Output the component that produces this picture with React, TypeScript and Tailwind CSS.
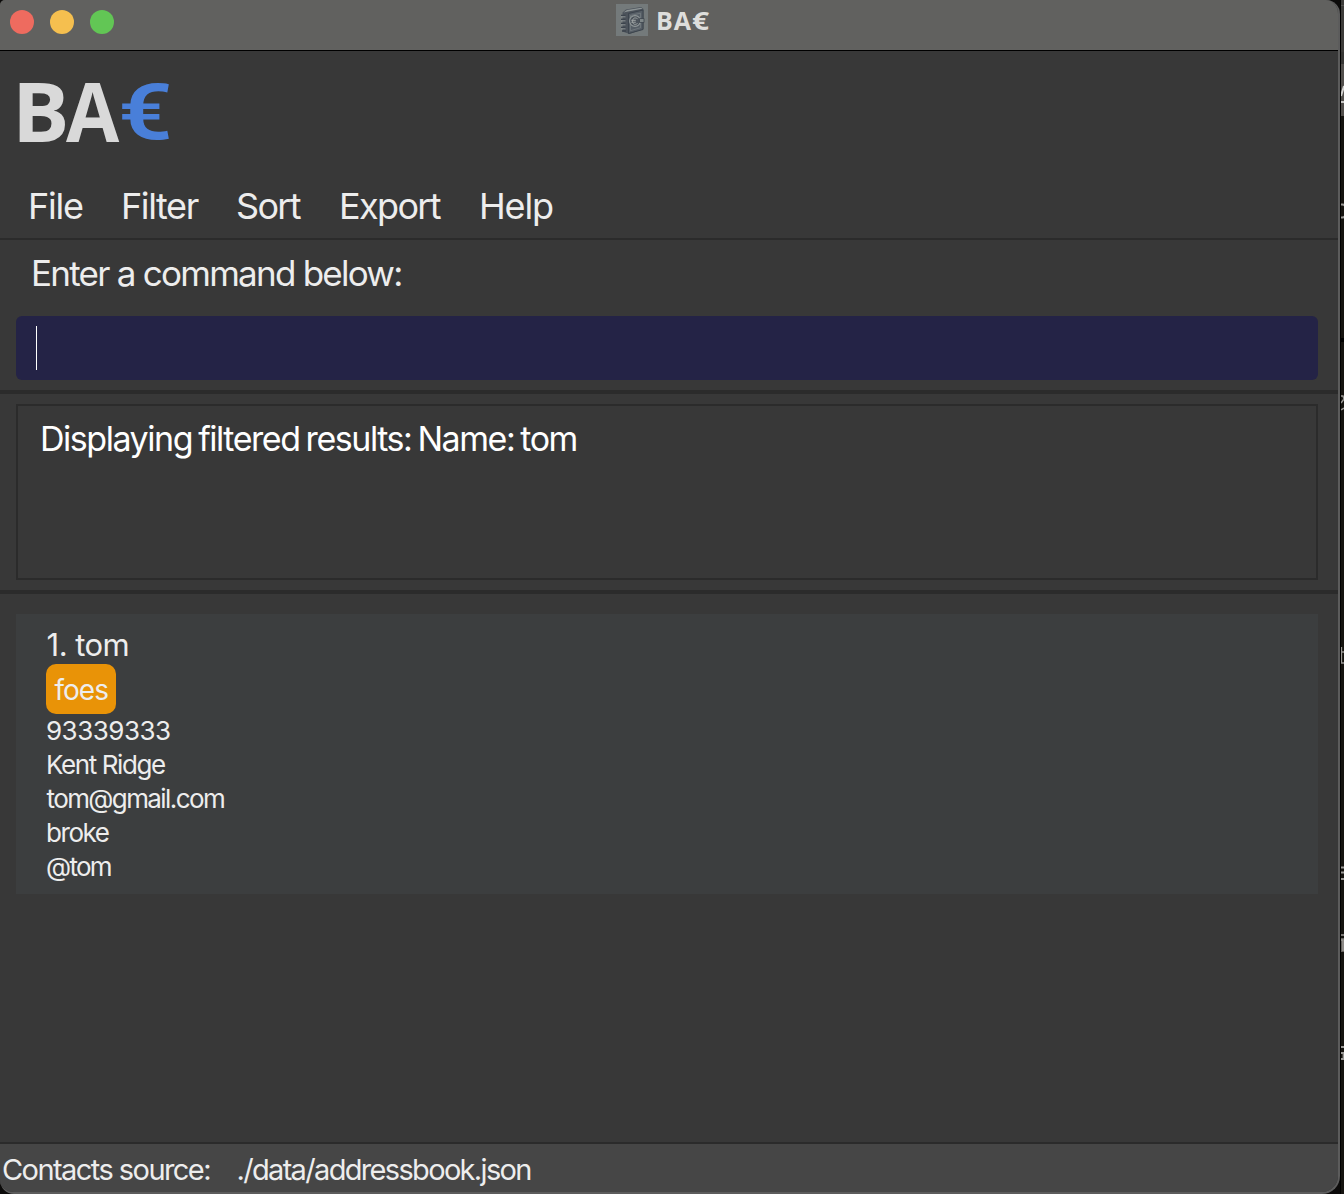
import type { ReactNode } from 'react';

function TrafficLights() {
  return (
    <div className="flex gap-4 pl-2.5">
      <span className="size-6 rounded-full bg-[#ee6b5f]" />
      <span className="size-6 rounded-full bg-[#f5bf4f]" />
      <span className="size-6 rounded-full bg-[#62c655]" />
    </div>
  );
}

function BookIcon() {
  return (
    <svg viewBox="0 0 32 32" className="size-8" fill="none">
      <rect width="32" height="32" fill="#747a7b" />
      <path d="M6.5 8.5 10 5.5 25 3l2.5 2v20L13.5 30l-7-2.5z" fill="#4c535b" />
      <path d="M7.5 8.5 11 6l14-2.2 1.5 1L12 7.6z" fill="#8d9495" />
      <path d="M12.5 9.5 27 6v19.5l-14.5 4z" fill="#565e66" stroke="#3c444d" />
      <path d="m14.5 11.5 10-2.3v14.5l-10 3z" stroke="#7f8789" strokeWidth=".6" />
      <circle cx="19" cy="17" r="5.4" fill="#4c535b" stroke="#92999a" strokeWidth="1.1" />
      <path d="M21.5 14.7c-3-1.8-5 0-5 2.5s2 4.3 5 2.3M15.3 16.3h4.5M15.3 18.2h4.5" stroke="#a0a6a6" strokeWidth="1" />
      <path d="M23.5 14.5h4.5v4h-4.5z" fill="#7e8688" stroke="#3c444d" strokeWidth=".8" />
      <path d="M5 11.5h4.5M5 15.5h4.5M5 19.5h4.5M5 23.5h4.5M6 27h4" stroke="#3c444d" strokeWidth="1.6" />
      <path d="M5 12.8h4.5M5 16.8h4.5M5 20.8h4.5M5 24.8h4.5" stroke="#9aa0a0" strokeWidth=".8" />
    </svg>
  );
}

function TitleBar() {
  return (
    <div className="grid h-[51px] shrink-0 grid-cols-[616px_1fr] border-b border-black bg-[#61615f]">
      <div className="pt-2.5">
        <TrafficLights />
      </div>
      <div className="flex items-start pt-1 text-[#dededc]">
        <BookIcon />
        <span className="ml-2 text-[25px] leading-8 font-bold tracking-[0.9px] font-['Open_Sans',sans-serif]">BA</span>
        <span className="text-[25px] leading-8 font-bold font-['Open_Sans',sans-serif]">
          <span className="inline-block origin-left scale-x-[1.2]">€</span>
        </span>
      </div>
    </div>
  );
}

function Logo() {
  return (
    <div className="flex h-[90px] pt-3.5 pl-3 text-[83px] leading-[90px] font-bold text-[#d9d9d9] font-['Open_Sans',sans-serif]">
      <span className="w-[54px]">
        <span className="inline-block origin-left scale-x-[1.03]">B</span>
      </span>
      <span className="w-[52px]">
        <span className="inline-block origin-left scale-x-[0.93]">A</span>
      </span>
      <span className="text-[78px] leading-[96px] font-semibold text-[#497fd9] font-['Roboto',sans-serif]">
        <span className="inline-block origin-left scale-x-[1.23]">€</span>
      </span>
    </div>
  );
}

function MenuBar() {
  return (
    <nav className="flex h-10 pl-7 text-[36px] leading-10">
      <span className="w-[93px] tracking-[-1.2px]">File</span>
      <span className="w-[115px] tracking-[-1.4px]">Filter</span>
      <span className="w-[103px] tracking-[-1.7px]">Sort</span>
      <span className="w-[140px] tracking-[-1.65px]">Export</span>
      <span className="tracking-[-1.15px]">Help</span>
    </nav>
  );
}

function Divider() {
  return <div className="h-1 shrink-0 bg-[#2b2b2b]" />;
}

function CardLine({ children }: { children: ReactNode }) {
  return <div className="h-[34px] text-[26px] leading-[34px]">{children}</div>;
}

function PersonCard() {
  return (
    <section className="mt-5 mr-5 ml-4 h-[280px] bg-[#3c3e3f] pt-[13px] pl-[30px]">
      <h2 className="h-[37px] pl-[0.6px] text-[31px] leading-9 tracking-[-0.55px]">1. tom</h2>
      <div className="h-[50px] w-[70px] rounded-[10px] bg-[#e99307] pl-[8.5px] text-[28px] leading-[52px] tracking-[-1px]">
        foes
      </div>
      <CardLine>
        <span className="tracking-[-0.5px]">93339333</span>
      </CardLine>
      <CardLine>
        <span className="tracking-[-1.4px]">Kent Ridge</span>
      </CardLine>
      <CardLine>
        <span className="ml-[0.5px] tracking-[-1.6px]">tom@gmail.com</span>
      </CardLine>
      <CardLine>
        <span className="tracking-[-1.45px]">broke</span>
      </CardLine>
      <CardLine>
        <span className="tracking-[-1.7px]">@tom</span>
      </CardLine>
    </section>
  );
}

/* Sliver of the darker window lying behind this one. */
function BackdropSliver() {
  return (
    <svg viewBox="0 0 3 1194" className="h-full w-[3px]" fill="none" stroke="#9a9895">
      <rect width="3" height="1194" fill="#15130f" stroke="none" />
      <rect width="3" height="52" fill="#3d3c3a" stroke="none" />
      <rect y="5" width="3" height="1" fill="#555452" stroke="none" />
      <rect y="52" width="3" height="12" fill="#373634" stroke="none" />
      <rect y="64" width="3" height="52" fill="#524f4c" stroke="none" />
      <path d="M0 96 3 86" stroke="#d5d4d2" strokeWidth="2" />
      <path d="M0 102h3" stroke="#c9c8c6" strokeWidth="2" />
      <path d="M0 204.5h2l1 1M0 217.5h2l1-1" strokeWidth="2" />
      <path d="M0 340h3" stroke="#000" strokeWidth="4" />
      <path d="M0 396h2l1 3-3 4M0 410l3-2" strokeWidth="1.5" />
      <path d="M.5 647v16h2.500M0 652h3" strokeWidth="1.3" />
      <path d="M0 867.5h3M0 872.5h3M0 879h3" strokeWidth="1.8" />
      <rect y="938" width="3" height="14" fill="#64615d" stroke="none" />
      <path d="M0 935h3M0 940h2v11" strokeWidth="1.5" />
      <path d="M0 1047h3M0 1053h2.5v6M0 1059h3" strokeWidth="1.8" />
    </svg>
  );
}

export default function App() {
  return (
    <div className="flex h-[1194px] w-[1344px] overflow-hidden bg-[#0c0b0a] text-[#ededed] font-['Inter',sans-serif]">
      <div className="flex h-[1194px] w-[1340px] flex-col overflow-hidden rounded-tl-[5px] rounded-tr-[14px] rounded-br-[18px] rounded-bl-[14px] border-r-2 border-b-2 border-[#5c5c5c] bg-[#383838]">
        <TitleBar />
        <header className="h-[189px] shrink-0 border-b-2 border-[#2b2b2b]">
          <Logo />
          <div className="pt-[45px]">
            <MenuBar />
          </div>
        </header>
        <div className="h-[150px] shrink-0 pt-[13px] pr-5 pl-4">
          <label className="block h-10 pl-[15px] text-[35px] leading-10 tracking-[-1.75px]">Enter a command below:</label>
          <div className="mt-[23px] h-16 rounded-md bg-[#242346] pt-2.5 pl-5">
            <div className="h-11 w-px bg-white" />
          </div>
        </div>
        <Divider />
        <div className="mt-2.5 mr-5 mb-2.5 ml-4 h-[176px] shrink-0 border-2 border-[#2b2b2b] pt-[13px] pl-[22px] text-[34px] leading-10 tracking-[-1.46px] text-white [word-spacing:-2px]">
          Displaying filtered results: Name: tom
        </div>
        <Divider />
        <PersonCard />
        <footer className="mt-auto flex h-[50px] shrink-0 border-t-2 border-[#2b2b2b] bg-[#464646] pl-0.5 text-[29px] leading-[51px]">
          <span className="w-[234.5px] tracking-[-1.56px]">Contacts source:</span>
          <span className="tracking-[-1.67px]">./data/addressbook.json</span>
        </footer>
      </div>
      <div className="w-px bg-black" />
      <BackdropSliver />
    </div>
  );
}
